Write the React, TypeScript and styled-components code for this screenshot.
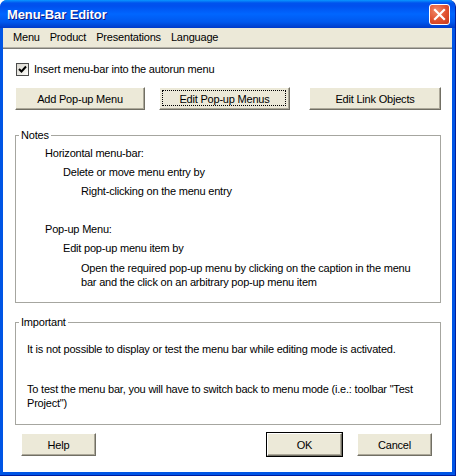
import React from "react";
import styled, { createGlobalStyle, css } from "styled-components";

const Global = createGlobalStyle`
  html, body { margin: 0; padding: 0; background: #ffffff; }
  body { width: 456px; height: 476px; overflow: hidden; }
  * { box-sizing: border-box; }
`;

const UI_FONT = `"Liberation Sans", Arial, sans-serif`;

const Frame = styled.div`
  width: 456px;
  height: 476px;
  display: flex;
  flex-direction: column;
  background: #0055e5;
  border-radius: 7px 7px 0 0;
  border-right: 1px solid #001ea0;
  border-bottom: 1px solid #001ea0;
  font-family: ${UI_FONT};
  overflow: hidden;
`;

const TitleBar = styled.div`
  height: 28px;
  flex: none;
  display: flex;
  align-items: center;
  justify-content: space-between;
  padding: 0 5px 0 7px;
  background: linear-gradient(
    to bottom,
    #0997ff 0px,
    #0053ee 3px,
    #0050ee 6px,
    #0066ff 14px,
    #0058ee 22px,
    #0044d4 26px,
    #0039c9 28px
  );
`;

const Title = styled.span`
  color: #ffffff;
  font-family: ${UI_FONT};
  font-weight: bold;
  font-size: 13px;
  letter-spacing: -0.1px;
  text-shadow: 1px 1px 0 #0a1883;
  margin-top: 1px;
`;

const CloseButton = styled.div`
  width: 21px;
  height: 21px;
  border: 1px solid #ffffff;
  border-radius: 3px;
  background: radial-gradient(circle at 35% 30%, #f08a6a 0%, #e0502e 55%, #c5391c 100%);
  display: flex;
  align-items: center;
  justify-content: center;
`;

const Body = styled.div`
  flex: 1;
  display: flex;
  flex-direction: column;
  margin: 0 3px 3px 3px;
  background: #ffffff;
`;

const MenuBar = styled.div`
  height: 21px;
  flex: none;
  display: flex;
  align-items: center;
  padding: 0 0 2px 5px;
  background: #ece9d8;
  border-bottom: 1px solid #7d7c76;
  box-shadow: inset 0 -1px 0 #b5b2a7;
`;

const MenuItem = styled.span`
  padding: 0 5px;
  font-size: 11px;
  letter-spacing: -0.2px;
  color: #000000;
`;

const Content = styled.div`
  flex: 1;
  display: flex;
  flex-direction: column;
  padding: 0 11px 0 12px;
  font-size: 11px;
  letter-spacing: -0.2px;
  color: #000000;
`;

const CheckRow = styled.label`
  display: flex;
  align-items: center;
  gap: 5px;
  height: 13px;
  margin: 14px 0 0 1px;
  line-height: 13px;
`;

const CheckBox = styled.span`
  width: 13px;
  height: 13px;
  flex: none;
  border: 1px solid #4b4b4b;
  background: linear-gradient(135deg, #d9d7cf 0%, #f0efea 70%, #ffffff 100%);
  display: flex;
  align-items: center;
  justify-content: center;
`;

const ButtonRow = styled.div`
  display: flex;
  align-items: center;
  margin-top: 11px;
`;

const Button = styled.div<{ $w: number; $gap?: number; $focus?: boolean; $default?: boolean }>`
  position: relative;
  width: ${(p) => p.$w}px;
  height: 23px;
  margin-left: ${(p) => p.$gap ?? 0}px;
  flex: none;
  display: flex;
  align-items: center;
  justify-content: center;
  background: #ece9d8;
  border-top: 1px solid #ffffff;
  border-left: 1px solid #ffffff;
  border-right: 1px solid #716f64;
  border-bottom: 1px solid #716f64;
  box-shadow: inset -1px -1px 0 #aca899;
  font-size: 11px;
  letter-spacing: -0.2px;
  color: #000000;
  ${(p) =>
    p.$default &&
    css`
      outline: 1px solid #000000;
      outline-offset: 0;
    `}
  ${(p) =>
    p.$focus &&
    css`
      &::after {
        content: "";
        position: absolute;
        inset: 2px 3px 3px 2px;
        border: 1px dotted #000000;
      }
    `}
`;

const Group = styled.fieldset<{ $h: number; $top: number }>`
  margin: ${(p) => p.$top}px 0 0 0;
  padding: 0;
  height: ${(p) => p.$h}px;
  min-width: 0;
  border: 1px solid #a6a6a0;
  display: block;
`;

const Legend = styled.legend`
  margin-left: 3px;
  padding: 0 2px;
  font-size: 11px;
  line-height: 13px;
  letter-spacing: -0.2px;
`;

const Line = styled.div<{ $indent: number; $top: number; $max?: number }>`
  margin: ${(p) => p.$top}px 0 0 ${(p) => p.$indent}px;
  line-height: 14px;
  ${(p) => p.$max && css`max-width: ${p.$max}px;`}
`;

const Footer = styled.div`
  display: flex;
  align-items: center;
  margin: 8px 0 0 6px;
`;

const CloseIcon = () => (
  <svg width="13" height="13" viewBox="0 0 13 13">
    <path d="M2 2 L11 11 M11 2 L2 11" stroke="#ffffff" strokeWidth="2.2" strokeLinecap="square" />
  </svg>
);

const CheckMark = () => (
  <svg width="9" height="9" viewBox="0 0 9 9">
    <path d="M1 4 L3.5 6.5 L8 1.5" stroke="#000000" strokeWidth="2" fill="none" />
  </svg>
);

export default function App() {
  return (
    <>
      <Global />
      <Frame>
        <TitleBar>
          <Title>Menu-Bar Editor</Title>
          <CloseButton>
            <CloseIcon />
          </CloseButton>
        </TitleBar>
        <Body>
          <MenuBar>
            <MenuItem>Menu</MenuItem>
            <MenuItem>Product</MenuItem>
            <MenuItem>Presentations</MenuItem>
            <MenuItem>Language</MenuItem>
          </MenuBar>
          <Content>
            <CheckRow>
              <CheckBox>
                <CheckMark />
              </CheckBox>
              Insert menu-bar into the autorun menu
            </CheckRow>

            <ButtonRow>
              <Button $w={130}>Add Pop-up Menu</Button>
              <Button $w={131} $gap={14} $focus>
                Edit Pop-up Menus
              </Button>
              <Button $w={132} $gap={19}>
                Edit Link Objects
              </Button>
            </ButtonRow>

            <Group $top={19} $h={174}>
              <Legend>Notes</Legend>
              <Line $indent={29} $top={4}>Horizontal menu-bar:</Line>
              <Line $indent={47} $top={5}>Delete or move menu entry by</Line>
              <Line $indent={65} $top={5}>Right-clicking on the menu entry</Line>
              <Line $indent={29} $top={24}>Pop-up Menu:</Line>
              <Line $indent={47} $top={5}>Edit pop-up menu item by</Line>
              <Line $indent={65} $top={6} $max={338}>
                Open the required pop-up menu by clicking on the caption in the menu bar and the click on
                an arbitrary pop-up menu item
              </Line>
            </Group>

            <Group $top={13} $h={109}>
              <Legend>Important</Legend>
              <Line $indent={11} $top={13}>
                It is not possible to display or test the menu bar while editing mode is activated.
              </Line>
              <Line $indent={11} $top={26} $max={395}>
                To test the menu bar, you will have to switch back to menu mode (i.e.: toolbar "Test
                Project")
              </Line>
            </Group>

            <Footer>
              <Button $w={75}>Help</Button>
              <Button $w={75} $gap={171} $default>
                OK
              </Button>
              <Button $w={75} $gap={15}>
                Cancel
              </Button>
            </Footer>
          </Content>
        </Body>
      </Frame>
    </>
  );
}
